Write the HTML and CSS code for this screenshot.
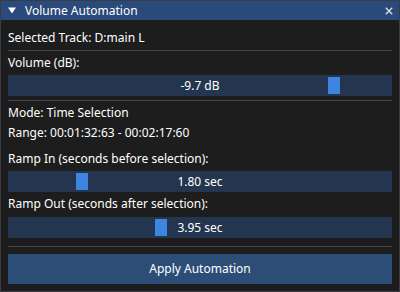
FILE: index.html
```html
<!DOCTYPE html>
<html>
<head>
<meta charset="utf-8">
<link rel="stylesheet" href="styles.css">
</head>
<body>
<div class="window">
  <div class="titlebar">
    <svg class="arrow" width="8" height="7" viewBox="0 0 8 7"><polygon points="0,0.5 8,0.5 4,6.5" fill="#ffffff"/></svg>
    <span class="title">Volume Automation</span>
    <svg class="close" width="8" height="8" viewBox="0 0 8 8"><path d="M0.8 0.8 L7.2 7.2 M7.2 0.8 L0.8 7.2" stroke="#d6dcea" stroke-width="1.4" fill="none"/></svg>
  </div>
  <div class="content">
    <div class="text first">Selected Track: D:main L</div>
    <div class="sep sep1"></div>
    <div class="text after-sep">Volume (dB):</div>
    <div class="slider"><span class="grab" style="left:320px"></span><span class="val">-9.7 dB</span></div>
    <div class="sep sep2"></div>
    <div class="text after-sep">Mode: Time Selection</div>
    <div class="text next">Range: 00:01:32:63 - 00:02:17:60</div>
    <div class="text spaced">Ramp In (seconds before selection):</div>
    <div class="slider"><span class="grab" style="left:68px"></span><span class="val">1.80 sec</span></div>
    <div class="text next">Ramp Out (seconds after selection):</div>
    <div class="slider slider-last"><span class="grab" style="left:147px"></span><span class="val">3.95 sec</span></div>
    <div class="sep sep3"></div>
    <div class="button">Apply Automation</div>
  </div>
</div>
</body>
</html>
```
FILE: styles.css
```css
html, body {
  margin: 0;
  padding: 0;
  background: #1d1d1d;
}
body {
  font-family: "Noto Sans", "Open Sans", sans-serif;
  font-size: 12px;
  color: #ffffff;
}
.window {
  width: 398px;
  height: 290px;
  border: 1px solid #3b3b44;
  background: #1d1d1d;
  display: flex;
  flex-direction: column;
  overflow: hidden;
}
.titlebar {
  height: 19px;
  background: #294a7a;
  display: flex;
  align-items: flex-start;
  padding: 0 6px 0 7px;
}
.arrow {
  display: block;
  margin-top: 6px;
}
.title {
  margin-left: 9px;
  margin-top: 2px;
  line-height: 16px;
  flex: 1;
  white-space: nowrap;
}
.close {
  display: block;
  margin-top: 6px;
}
.content {
  padding: 0 7px;
  display: flex;
  flex-direction: column;
}
.text {
  height: 16px;
  line-height: 16px;
  white-space: nowrap;
}
.first { margin-top: 10px; }
.after-sep { margin-top: 4px; }
.next { margin-top: 4px; }
.spaced { margin-top: 10px; }
.sep {
  height: 1px;
  background: #43434b;
}
.sep1 { margin-top: 4px; }
.sep2 { margin-top: 4px; }
.sep3 { margin-top: 8px; }
.slider {
  position: relative;
  margin-top: 4px;
  height: 21px;
  line-height: 21px;
  background: #24364f;
  text-align: center;
}
.slider-last { margin-top: 5px; }
.grab {
  position: absolute;
  top: 2px;
  width: 12px;
  height: 17px;
  background: #3d85e0;
}
.val {
  position: relative;
}
.button {
  margin-top: 7px;
  height: 30px;
  line-height: 30px;
  background: #2c4e76;
  text-align: center;
}
```
